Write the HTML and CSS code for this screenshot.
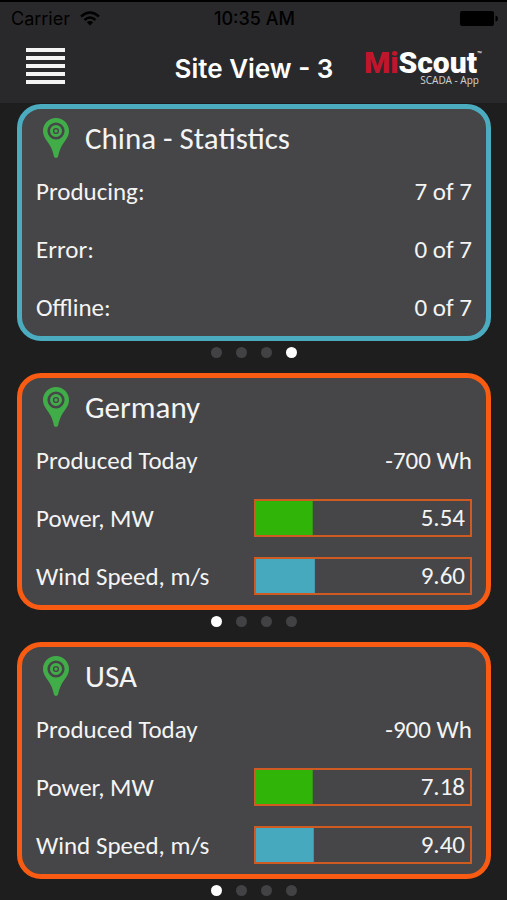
FILE: index.html
```html
<!DOCTYPE html>
<html lang="en">
<head>
<meta charset="utf-8">
<meta name="viewport" content="width=device-width, initial-scale=1">
<title>Site View - 3</title>
<link rel="stylesheet" href="styles.css">
</head>
<body>
<svg class="defs" aria-hidden="true">
  <symbol id="pin" viewBox="0 0 26 40">
    <path fill="#41ad49" d="M13 0C5.800 0 0 5.800 0 13c0 7 5.500 10.500 8.500 17.500 1.200 3 1.800 5 2.300 7.500.3 1.300 1.200 2 2.200 2s1.900-.7 2.200-2c.5-2.500 1.100-4.500 2.300-7.500C20.500 23.500 26 20 26 13 26 5.800 20.200 0 13 0z"/>
    <circle cx="13" cy="13" r="7.300" fill="#41ad49" stroke="#464648" stroke-width="2.600"/>
    <circle cx="13" cy="13" r="2.400" fill="#41ad49" stroke="#464648" stroke-width="1.400"/>
  </symbol>
</svg>
<header class="top">
  <div class="status">
    <span class="carrier">Carrier
      <svg class="wifi" viewBox="0 0 20 15" aria-hidden="true"><path d="M1 5.500Q10-2.500 19 5.500M4.500 9Q10 4 15.500 9" fill="none" stroke="#000" stroke-width="2.400"/><path d="M6.800 11.300Q10 8.700 13.200 11.300L10 14.500z"/></svg>
    </span>
    <span class="time">10:35 AM</span>
    <svg class="battery" viewBox="0 0 38 15" aria-hidden="true"><rect width="34" height="15" rx="2"/><path d="M35.500 4.500Q38 5 38 7.500T35.500 10.500z"/></svg>
  </div>
  <div class="nav">
    <button class="menu" type="button" aria-label="Menu"><i></i><i></i><i></i><i></i><i></i></button>
    <h1>Site View - 3</h1>
    <div class="logo">
      <div class="brand"><b class="mi">Mi</b><b>Scout</b><sup>™</sup></div>
      <div class="sub">SCADA - App</div>
    </div>
  </div>
</header>
<main>
  <section class="card stats">
    <h2><svg class="pin" aria-hidden="true"><use href="#pin"/></svg>China - Statistics</h2>
    <dl>
      <div class="row"><dt>Producing:</dt><dd>7 of 7</dd></div>
      <div class="row"><dt>Error:</dt><dd>0 of 7</dd></div>
      <div class="row"><dt>Offline:</dt><dd>0 of 7</dd></div>
    </dl>
  </section>
  <div class="dots"><i></i><i></i><i></i><i class="on"></i></div>
  <section class="card">
    <h2><svg class="pin" aria-hidden="true"><use href="#pin"/></svg>Germany</h2>
    <dl>
      <div class="row"><dt>Produced Today</dt><dd>-700 Wh</dd></div>
      <div class="row"><dt>Power, MW</dt><dd class="bar power" style="--fill:26.500%">5.54</dd></div>
      <div class="row"><dt>Wind Speed, m/s</dt><dd class="bar wind" style="--fill:27.500%">9.60</dd></div>
    </dl>
  </section>
  <div class="dots"><i class="on"></i><i></i><i></i><i></i></div>
  <section class="card">
    <h2><svg class="pin" aria-hidden="true"><use href="#pin"/></svg>USA</h2>
    <dl>
      <div class="row"><dt>Produced Today</dt><dd>-900 Wh</dd></div>
      <div class="row"><dt>Power, MW</dt><dd class="bar power" style="--fill:26.500%">7.18</dd></div>
      <div class="row"><dt>Wind Speed, m/s</dt><dd class="bar wind" style="--fill:27%">9.40</dd></div>
    </dl>
  </section>
  <div class="dots"><i class="on"></i><i></i><i></i><i></i></div>
</main>
</body>
</html>
```
FILE: styles.css
```css
* { box-sizing: border-box; }
body {
  margin: 0;
  background: #1e1e1e;
  color: #f4f4f4;
  font-family: Carlito, Calibri, "Noto Sans", sans-serif;
}
h1, h2, dl, dd { margin: 0; font-weight: 400; }
.defs { position: absolute; width: 0; height: 0; }
.top {
  background: #29292b;
  border-top: 2px solid #000;
  font-family: Inter, sans-serif;
  padding-bottom: 1px;
}
.status {
  display: grid;
  grid-template-columns: 1fr auto 1fr;
  align-items: center;
  height: 33px;
  padding: 0 9px 0 11px;
  color: #000;
  font-size: 18px;
}
.carrier { display: flex; align-items: center; gap: 10px; }
.wifi { width: 20px; height: 15px; }
.time { font-weight: 500; }
.battery { width: 38px; height: 15px; justify-self: end; }
.nav {
  display: grid;
  grid-template-columns: 1fr auto 1fr;
  align-items: center;
  height: 67px;
  padding: 0 25px 0 26px;
}
.menu {
  display: flex;
  flex-direction: column;
  gap: 4px;
  width: 39px;
  padding: 0 0 5px;
  border: 0;
  background: none;
}
.menu i { width: 100%; height: 4px; background: #f4f4f4; }
.nav h1 { color: #fff; font-size: 26px; font-weight: 600; line-height: 32px; }
.logo { justify-self: end; color: #fff; text-align: right; white-space: nowrap; }
.brand {
  display: flex;
  justify-content: flex-end;
  font: 700 30px/24px Roboto, sans-serif;
}
.brand .mi { color: #c1152b; }
.brand sup { font-size: 8px; line-height: 8px; font-weight: 400; }
.sub { padding: 0 3px 2px 0; font: 400 10px/10px "Noto Sans", sans-serif; color: #ccc; }
main { padding: 0 16px 0 17px; margin-top: 1px; }
.card {
  border: 5px solid #f95b12;
  border-radius: 24px;
  background: #464648;
  padding: 0 14px;
}
.stats { border-color: #4bacc0; }
.card h2 {
  display: flex;
  align-items: center;
  gap: 16px;
  height: 53px;
  padding: 5px 0 0 7px;
  font-size: 31px;
}
.pin { width: 26px; height: 40px; }
.row {
  display: flex;
  align-items: center;
  justify-content: space-between;
  height: 58px;
  font-size: 25px;
}
.bar {
  width: 50%;
  height: 38px;
  border: 2px solid #cf5a22;
  padding-right: 5px;
  line-height: 34px;
  text-align: right;
  background: linear-gradient(var(--tone), var(--tone)) no-repeat 0 0 / var(--fill) 100%;
}
.power { --tone: #30b408; }
.wind { --tone: #46a9be; }
.dots {
  display: flex;
  justify-content: center;
  gap: 14px;
  height: 32px;
  padding-top: 6px;
}
.dots i { width: 11px; height: 11px; border-radius: 50%; background: #424244; }
.dots .on { background: #fff; }
```
